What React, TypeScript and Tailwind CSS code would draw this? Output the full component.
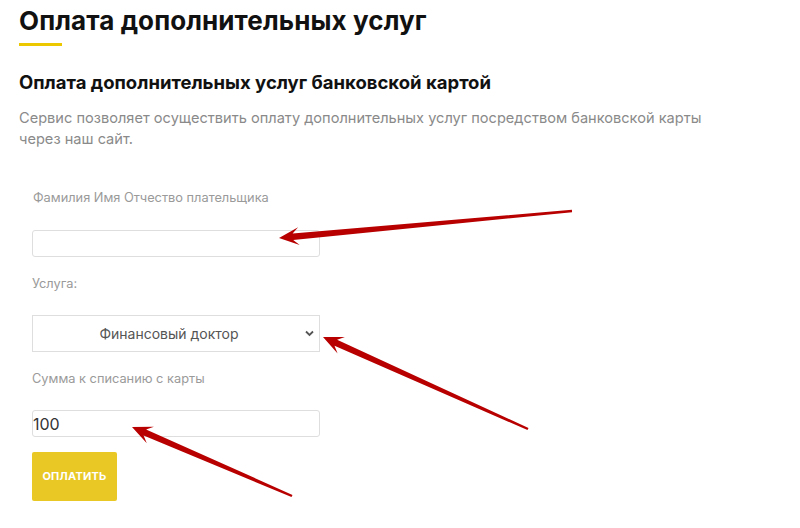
import React from "react";

type P = [number, number];

function arrowPoints(tail: P, tip: P): string {
  const dx = tip[0] - tail[0];
  const dy = tip[1] - tail[1];
  const len = Math.hypot(dx, dy);
  const ux = dx / len;
  const uy = dy / len;
  const nx = -uy;
  const ny = ux;
  const L = 20;
  const W = 9;
  const notch = 14;
  const pt = (p: P, a: number, b: number): string =>
    `${(p[0] + ux * a + nx * b).toFixed(1)},${(p[1] + uy * a + ny * b).toFixed(1)}`;
  const pts = [
    pt(tail, 0, 1.2),
    pt(tip, -notch, 3.2),
    pt(tip, -L, W),
    pt(tip, 0, 0),
    pt(tip, -L, -W),
    pt(tip, -notch, -3.2),
    pt(tail, 0, -1.2),
  ];
  return pts.join(" ");
}

const arrows: [P, P][] = [
  [[572, 211], [279, 238]],
  [[528, 429], [323, 337]],
  [[292, 496], [132, 427]],
];

export default function App() {
  return (
    <div className="relative w-[800px] h-[528px] bg-white overflow-hidden font-['Inter',sans-serif]">
      <div className="pl-[19px] pt-[5px]">
        <h1 className="text-[26px] leading-[32px] font-bold text-[#111] tracking-[0.1px]">
          Оплата дополнительных услуг
        </h1>
        <div className="mt-[6px] w-[43px] h-[3px] bg-[#ecc800]" />
        <h2 className="mt-[24px] text-[18.5px] leading-[24px] font-bold text-[#111]">
          Оплата дополнительных услуг банковской картой
        </h2>
        <p className="mt-[14px] text-[14.6px] leading-[21px] text-[#8a8a8a]">
          Сервис позволяет осуществить оплату дополнительных услуг посредством банковской карты
          <br />
          через наш сайт.
        </p>
      </div>

      <form className="pl-[32px] mt-[40px] flex flex-col">
        <label className="pl-[1px] text-[12.8px] leading-[16px] text-[#9a9a9a]">
          Фамилия Имя Отчество плательщика
        </label>
        <div className="mt-[24px] w-[288px] h-[27px] border border-[#dedede] rounded-[3px] bg-white" />

        <label className="mt-[19px] text-[12.8px] leading-[16px] text-[#9a9a9a]">Услуга:</label>
        <div className="mt-[23px] w-[288px] h-[37px] border border-[#dedede] bg-white flex items-center relative">
          <span className="flex-1 text-center text-[14px] text-[#555] pr-[14px]">Финансовый доктор</span>
          <svg
            className="absolute right-[5px] top-[14px]"
            width="9"
            height="7"
            viewBox="0 0 9 7"
          >
            <path d="M1 1.5 L4.5 5 L8 1.5" fill="none" stroke="#555" strokeWidth="1.8" />
          </svg>
        </div>

        <label className="mt-[19px] text-[12.8px] leading-[16px] text-[#9a9a9a]">
          Сумма к списанию с карты
        </label>
        <div className="mt-[23px] w-[288px] h-[27px] border border-[#dedede] rounded-[3px] bg-white flex items-center">
          <span className="text-[16px] text-[#333] leading-none">100</span>
        </div>

        <button
          type="button"
          className="mt-[15px] w-[85px] h-[49px] rounded-[2px] bg-[#e9c825] text-white text-[11px] font-bold tracking-[0.2px]"
        >
          ОПЛАТИТЬ
        </button>
      </form>

      <svg className="absolute inset-0 pointer-events-none" width="800" height="528">
        {arrows.map(([t, h], i) => (
          <polygon key={i} points={arrowPoints(t, h)} fill="#b80000" />
        ))}
      </svg>
    </div>
  );
}
